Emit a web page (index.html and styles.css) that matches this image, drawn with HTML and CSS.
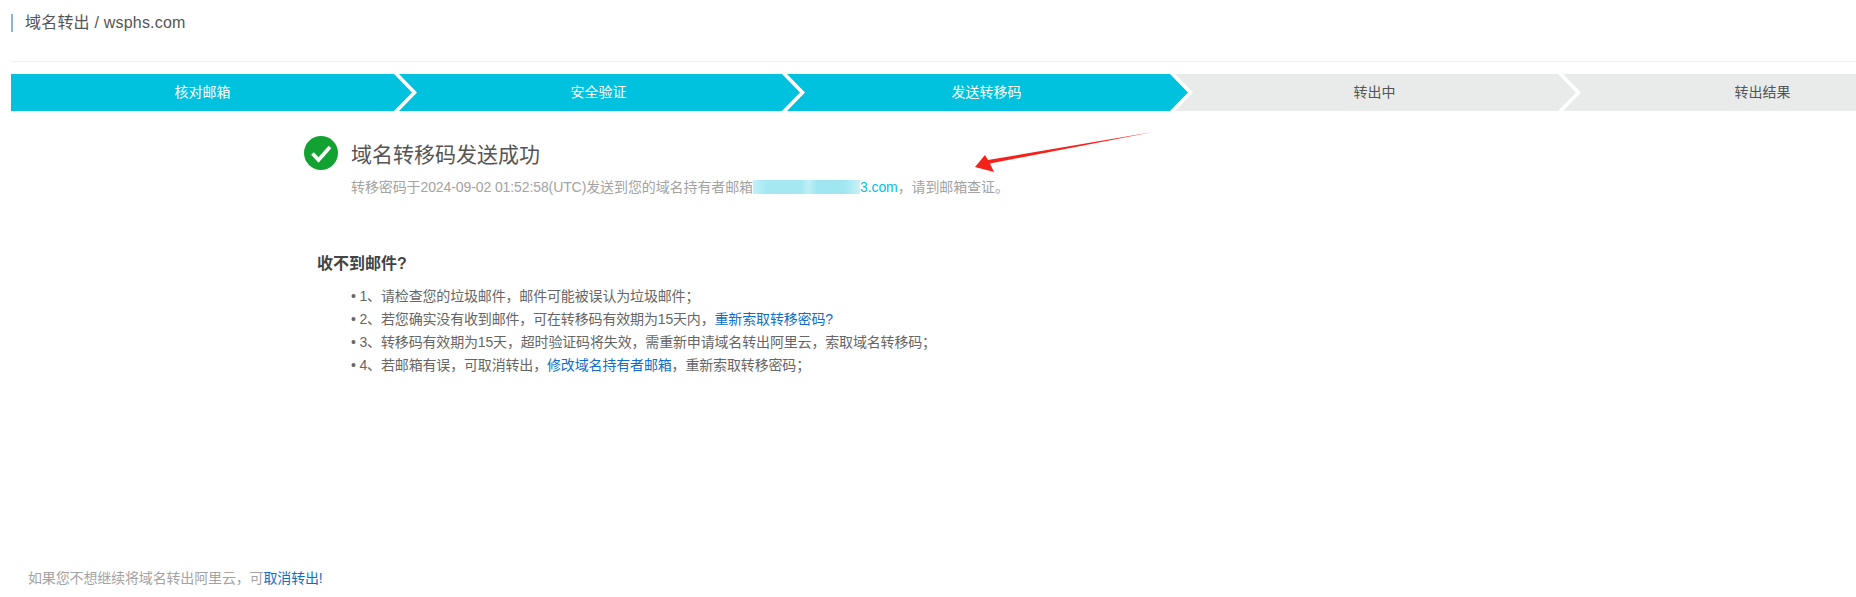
FILE: index.html
```html
<!DOCTYPE html>
<html lang="zh-CN">
<head>
    <meta charset="UTF-8">
    <meta name="viewport" content="width=device-width, initial-scale=1.0">
    <title>域名转出</title>
    <link rel="stylesheet" href="styles.css">
</head>
<body>
    <header class="page-head">
        <h1 class="page-title">域名转出 / wsphs.com</h1>
    </header>

    <ol class="steps">
        <li class="step done first">核对邮箱</li>
        <li class="step done">安全验证</li>
        <li class="step done">发送转移码</li>
        <li class="step">转出中</li>
        <li class="step">转出结果</li>
    </ol>

    <section class="result">
        <svg class="result-icon" viewBox="0 0 34 34" width="34" height="34">
            <circle cx="17" cy="17" r="17" fill="#12a232"/>
            <path d="M8.5 17.5l6 6.5L26 11" fill="none" stroke="#fff" stroke-width="3.6"/>
        </svg>
        <div>
            <h2 class="result-title">域名转移码发送成功</h2>
            <p class="result-text">转移密码于2024-09-02 01:52:58(UTC)发送到您的域名持有者邮箱<span class="email"><span class="email-mask"></span>3.com</span>，请到邮箱查证。</p>
        </div>
    </section>

    <svg class="arrow" viewBox="0 0 190 50" width="190" height="50">
        <path d="M183 2L20 33.5L24 42L5 37L15 25L18 30Z" fill="#f5221b"/>
    </svg>

    <section class="help">
        <h3 class="help-title">收不到邮件?</h3>
        <ul class="help-list">
            <li>1、请检查您的垃圾邮件，邮件可能被误认为垃圾邮件；</li>
            <li>2、若您确实没有收到邮件，可在转移码有效期为15天内，<a href="#">重新索取转移密码?</a></li>
            <li>3、转移码有效期为15天，超时验证码将失效，需重新申请域名转出阿里云，索取域名转移码；</li>
            <li>4、若邮箱有误，可取消转出，<a href="#">修改域名持有者邮箱</a>，重新索取转移密码；</li>
        </ul>
    </section>

    <footer class="page-foot">如果您不想继续将域名转出阿里云，可<a href="#">取消转出!</a></footer>
</body>
</html>
```

FILE: styles.css
```css
html, body {
    margin: 0;
    padding: 0;
    height: 100%;
}
body {
    display: flex;
    flex-direction: column;
    position: relative;
    overflow: hidden;
    font-family: "Liberation Sans", "Noto Sans CJK SC", sans-serif;
    font-size: 14px;
    color: #666;
    background: #fff;
}
a {
    color: #0f6fc6;
    text-decoration: none;
}
.page-head {
    margin-left: 11px;
    padding-top: 14px;
    height: 47px;
    border-bottom: 1px solid #f0f0f0;
}
.page-title {
    margin: 0;
    padding-left: 12px;
    border-left: 2px solid #88b7e0;
    font-size: 16px;
    font-weight: normal;
    line-height: 18px;
    letter-spacing: 0.2px;
    color: #555;
}
.steps {
    display: flex;
    margin: 12px 0 0 11px;
    padding: 0;
    list-style: none;
}
.step {
    flex: 0 0 401px;
    box-sizing: border-box;
    margin-right: -13px;
    padding: 0 20px 0 18px;
    height: 37px;
    line-height: 37px;
    text-align: center;
    color: #555;
    background: #e9ebeb;
    clip-path: polygon(0 0, calc(100% - 18px) 0, 100% 50%, calc(100% - 18px) 100%, 0 100%, 18px 50%);
}
.step.done {
    color: #fff;
    background: #00c1de;
}
.step.first {
    padding: 0 18px 0 0;
    clip-path: polygon(0 0, calc(100% - 18px) 0, 100% 50%, calc(100% - 18px) 100%, 0 100%);
}
.result {
    display: flex;
    gap: 13px;
    margin: 25px 0 0 304px;
}
.result-icon {
    flex: none;
}
.result-title {
    margin: 4px 0 0;
    font-size: 21px;
    font-weight: normal;
    line-height: 30px;
    color: #555;
}
.result-text {
    margin: 8px 0 0;
    line-height: 18px;
    letter-spacing: -0.1px;
    color: #a3a3a3;
}
.email {
    color: #00c1de;
}
.email-mask {
    display: inline-block;
    width: 107px;
    height: 14px;
    vertical-align: -2px;
    background: linear-gradient(90deg, #c4f0f6 0, #a5e8f2 12%, #a5e8f2 45%, #bfeff5 52%, #a0e6f1 60%, #a0e6f1 85%, #c8f2f7 100%);
}
.arrow {
    position: absolute;
    left: 970px;
    top: 130px;
}
.help {
    margin: 58px 0 0 317px;
}
.help-title {
    margin: 0;
    font-size: 16px;
    line-height: 20px;
    color: #444;
}
.help-list {
    margin: 11px 0 0;
    padding: 0 0 0 34px;
    line-height: 23px;
    letter-spacing: -0.16px;
    list-style: none;
}
.help-list li::before {
    content: "• ";
}
.page-foot {
    margin-top: auto;
    padding: 0 0 11px 28px;
    line-height: 16px;
    letter-spacing: -0.15px;
    color: #a3a3a3;
}
```
